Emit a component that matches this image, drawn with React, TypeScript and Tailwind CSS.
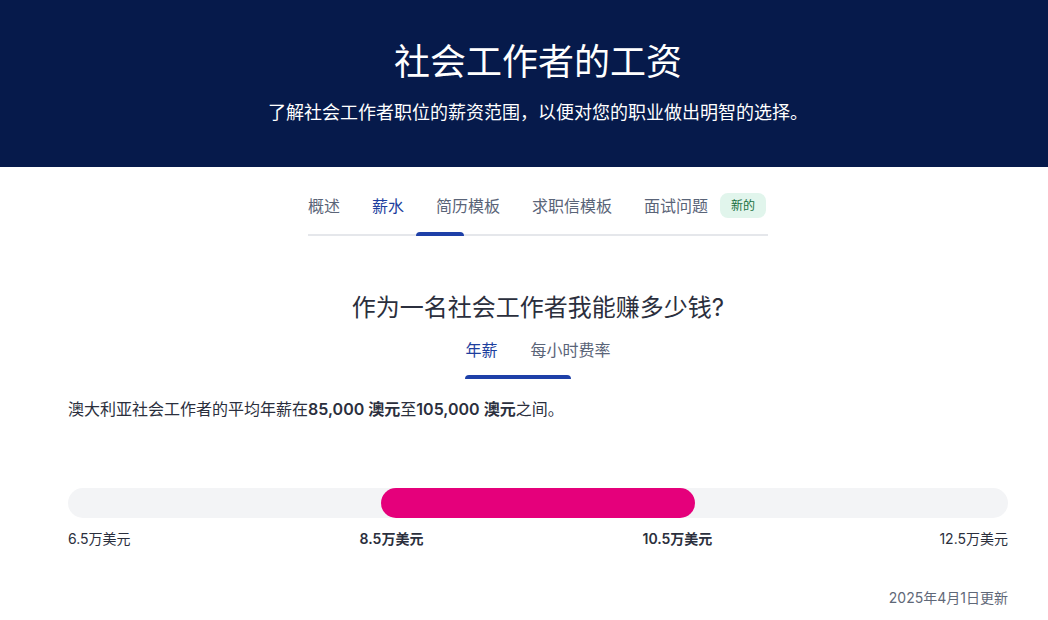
const font = {
  fontFamily: 'Inter, "Noto Sans CJK SC", sans-serif',
};

const tabs = ["概述", "薪水", "简历模板", "求职信模板", "面试问题"];

export default function App() {
  return (
    <div className="w-full min-h-screen bg-white" style={font}>
      {/* Hero */}
      <div className="bg-[#061a4b] h-[167px] pl-[68px] pr-[40px] flex flex-col items-center pt-[36px]">
        <h1 className="text-[36px] leading-[52px] text-white font-normal">社会工作者的工资</h1>
        <p className="mt-[12px] text-[18px] leading-[26px] text-white">
          了解社会工作者职位的薪资范围，以便对您的职业做出明智的选择。
        </p>
      </div>

      <div className="pl-[68px] pr-[40px]">
        {/* Top tabs */}
        <div className="flex justify-center">
          <div className="relative w-[460px] border-b-2 border-[#e5e7eb] flex items-center h-[69px] pt-[10px]">
            {tabs.map((t, i) => (
              <span
                key={t}
                className={`text-[16px] ${i === 0 ? "" : "ml-[32px]"} ${
                  i === 1 ? "text-[#1e3f9e]" : "text-[#5a6478]"
                }`}
              >
                {t}
              </span>
            ))}
            <span className="ml-[12px] rounded-lg bg-[#e1f5ec] text-[#17703f] text-[12px] h-[25px] px-[11px] flex items-center">
              新的
            </span>
            <div className="absolute left-[108px] bottom-[-2px] w-[48px] h-[4px] rounded-t bg-[#1e40a8]" />
          </div>
        </div>

        {/* Heading */}
        <h2 className="mt-[56px] text-center text-[24px] leading-[32px] text-[#2b2f3d]">
          作为一名社会工作者我能赚多少钱?
        </h2>
        <div className="flex justify-center mt-[14px]">
          <div className="flex flex-col">
            <div className="flex text-[16px] leading-[24px]">
              <span className="text-[#1e3f9e]">年薪</span>
              <span className="ml-[33px] text-[#5a6478]">每小时费率</span>
            </div>
            <div className="mt-[13px] w-[106px] h-[4px] rounded-t bg-[#1e40a8]" />
          </div>
        </div>

        <p className="mt-[18px] text-[16px] leading-[24px] text-[#2b2f3d]">
          澳大利亚社会工作者的平均年薪在<b className="font-semibold">85,000 澳元</b>至
          <b className="font-semibold">105,000 澳元</b>之间。
        </p>

        {/* Range bar */}
        <div className="mt-[67px] h-[30px] rounded-full bg-[#f3f4f6] flex">
          <div className="w-1/3" />
          <div className="w-1/3 rounded-full bg-[#e5007b]" />
        </div>
        <div className="mt-[11px] flex justify-between text-[14px] leading-[20px] text-[#2b2f3d]">
          <span>6.5万美元</span>
          <span className="font-semibold ml-[10px]">8.5万美元</span>
          <span className="font-semibold mr-[8px]">10.5万美元</span>
          <span>12.5万美元</span>
        </div>

        <p className="mt-[39px] text-right text-[14px] leading-[20px] text-[#5f6878]">
          2025年4月1日更新
        </p>
      </div>
    </div>
  );
}
